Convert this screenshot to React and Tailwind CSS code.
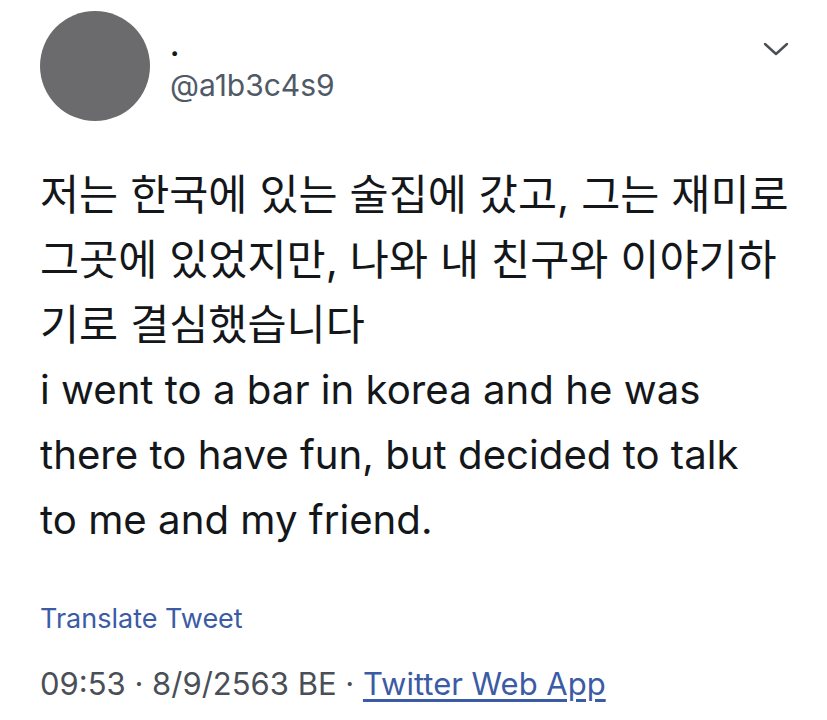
import React from "react";

const Chevron = () => (
  <svg width="26" height="16" viewBox="0 0 26 16" fill="none">
    <path
      d="M2 3 L13 13 L24 3"
      stroke="#4a4f57"
      strokeWidth="2.4"
      strokeLinecap="round"
      strokeLinejoin="round"
    />
  </svg>
);

const App = () => {
  return (
    <div
      className="w-[827px] h-[720px] bg-white overflow-hidden pl-[40px] pr-[30px] pt-[11px]"
      style={{ fontFamily: "Inter, 'Noto Sans CJK KR', sans-serif" }}
    >
      {/* header */}
      <div className="flex items-start">
        <div className="w-[110px] h-[110px] rounded-full bg-[#6b6a6c] shrink-0" />
        <div className="ml-[20px] flex flex-col pt-[20px]">
          <span className="text-[28px] leading-[30px] font-bold text-[#14171a]">.</span>
          <span className="text-[30px] leading-[36px] text-[#505a66] mt-[6px]">@a1b3c4s9</span>
        </div>
        <div className="ml-auto mt-[30px] mr-[8px]">
          <Chevron />
        </div>
      </div>

      {/* tweet text */}
      <div className="mt-[41px] leading-[65px] text-[#14171a] whitespace-nowrap">
        <p className="text-[42.5px]">
          저는 한국에 있는 술집에 갔고, 그는 재미로
          <br />
          그곳에 있었지만, 나와 내 친구와 이야기하
          <br />
          기로 결심했습니다
        </p>
        <p className="text-[40.2px]">
          i went to a bar in korea and he was
          <br />
          there to have fun, but decided to talk
          <br />
          to me and my friend.
        </p>
      </div>

      <div className="mt-[51px] text-[27px] leading-[32px] text-[#3b5ba5]">Translate Tweet</div>

      <div className="mt-[30px] text-[31px] leading-[38px] text-[#4a4f57]">
        09:53 · 8/9/2563 BE ·{" "}
        <span className="text-[#3b5ba5] underline underline-offset-4">Twitter Web App</span>
      </div>
    </div>
  );
};

export default App;
